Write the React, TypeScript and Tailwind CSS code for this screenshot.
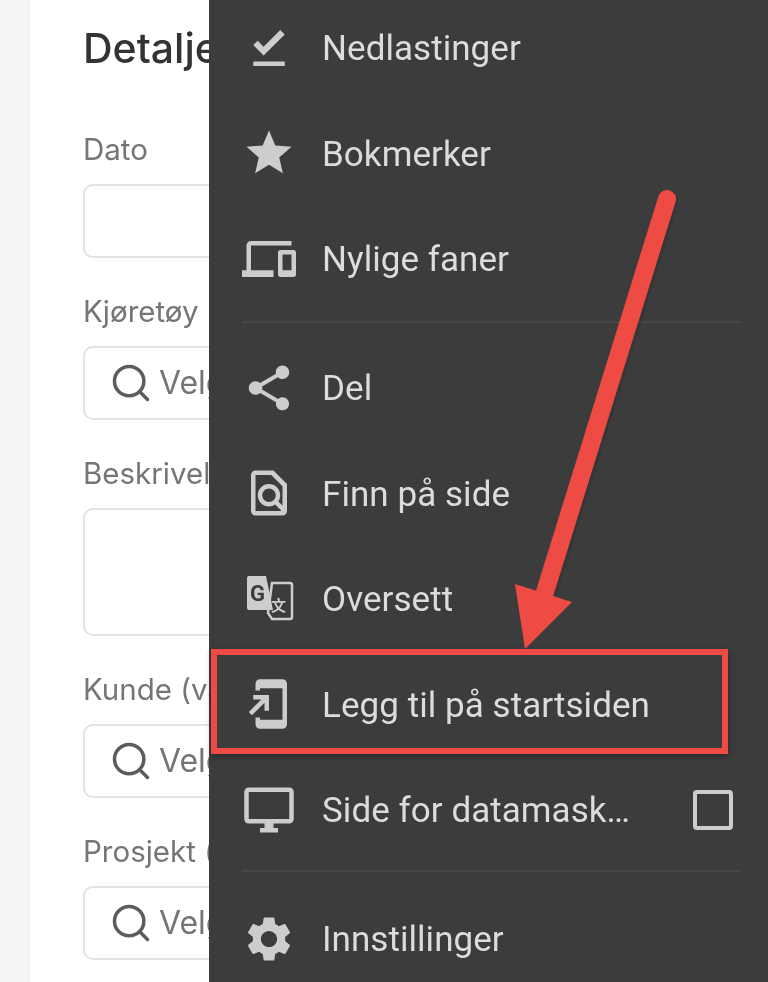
import React, { ReactNode } from 'react';
import { Search } from 'lucide-react';

// Material style icons, 24 unit grid
const Icon: React.FC<{ d: string }> = ({ d }) => (
  <svg viewBox="0 0 24 24" className="w-[54px] h-[54px] shrink-0 fill-[#cdcdcd]">
    <path d={d} />
  </svg>
);

const TranslateIcon = () => (
  <svg viewBox="0 0 54 54" className="w-[54px] h-[54px] shrink-0">
    <path d="M30 11h18a2 2 0 0 1 2 2v32a2 2 0 0 1-2 2H30l-4-6z" fill="none" stroke="#cdcdcd" strokeWidth="2.5" />
    <path d="M7 4h17l7 34H7a2 2 0 0 1-2-2V6a2 2 0 0 1 2-2z" fill="#cdcdcd" />
    <text x="8" y="29" fontFamily="Roboto, sans-serif" fontWeight="700" fontSize="22" fill="#3c3c3c">G</text>
    <text x="29" y="39" fontFamily="'Noto Sans CJK SC', sans-serif" fontWeight="700" fontSize="15" fill="#cdcdcd">文</text>
  </svg>
);

const paths = {
  downloads: 'M5 18h14v2H5v-2zm4.6-2.7L5 10.7l2-1.9 2.6 2.6L17 4l2 2-9.4 9.3z',
  star: 'M12 17.27L18.18 21l-1.64-7.03L22 9.24l-7.19-.61L12 2 9.19 8.63 2 9.24l5.46 4.73L5.82 21z',
  devices: 'M4 6h18V4H4c-1.1 0-2 .9-2 2v11H0v3h14v-3H4V6zm19 2h-6c-.55 0-1 .45-1 1v10c0 .55.45 1 1 1h6c.55 0 1-.45 1-1V9c0-.55-.45-1-1-1zm-1 9h-4v-7h4v7z',
  share: 'M18 16.08c-.76 0-1.44.3-1.96.77L8.91 12.7c.05-.23.09-.46.09-.7s-.04-.47-.09-.7l7.05-4.11c.54.5 1.25.81 2.04.81 1.66 0 3-1.34 3-3s-1.34-3-3-3-3 1.34-3 3c0 .24.04.47.09.7L8.04 9.81C7.5 9.31 6.79 9 6 9c-1.66 0-3 1.34-3 3s1.34 3 3 3c.79 0 1.5-.31 2.04-.81l7.12 4.16c-.05.21-.08.43-.08.65 0 1.61 1.31 2.92 2.92 2.92 1.61 0 2.92-1.31 2.92-2.92s-1.31-2.92-2.92-2.92z',
  find: 'M14 2H6c-1.1 0-2 .9-2 2v16c0 1.1.9 2 2 2h12c1.1 0 2-.9 2-2V8l-6-6zM6 4h7l5 5v8.58l-1.84-1.84c1.28-1.94 1.07-4.57-.64-6.28C14.55 8.49 13.28 8 12 8c-1.28 0-2.55.49-3.53 1.46-1.95 1.95-1.95 5.11 0 7.05.97.97 2.25 1.46 3.53 1.46.96 0 1.92-.28 2.75-.83L17.6 20H6V4zm8.11 11.1c-.56.56-1.31.88-2.11.88s-1.55-.31-2.11-.88c-.56-.56-.88-1.31-.88-2.11s.31-1.55.88-2.11c.56-.57 1.31-.88 2.11-.88s1.55.31 2.11.88c.56.56.88 1.31.88 2.11s-.31 1.55-.88 2.11z',
  addHome: 'M18 1.01L8 1c-1.1 0-2 .9-2 2v3h2V5h10v14H8v-1H6v3c0 1.1.9 2 2 2h10c1.1 0 2-.9 2-2V3c0-1.1-.9-1.99-2-1.99zM10 15h2V8H5v2h3.59L3 15.59 4.41 17 10 11.41V15z',
  desktop: 'M21 2H3c-1.1 0-2 .9-2 2v12c0 1.1.9 2 2 2h7v2H8v2h8v-2h-2v-2h7c1.1 0 2-.9 2-2V4c0-1.1-.9-2-2-2zm0 14H3V4h18v12z',
  settings: 'M19.14 12.94c.04-.3.06-.61.06-.94 0-.32-.02-.64-.07-.94l2.03-1.58c.18-.14.23-.41.12-.61l-1.92-3.32c-.12-.22-.37-.29-.59-.22l-2.39.96c-.5-.38-1.03-.7-1.62-.94l-.36-2.54c-.04-.24-.24-.41-.48-.41h-3.84c-.24 0-.43.17-.47.41l-.36 2.54c-.59.24-1.13.57-1.62.94l-2.39-.96c-.22-.08-.47 0-.59.22L2.74 8.87c-.12.21-.08.47.12.61l2.03 1.58c-.05.3-.09.63-.09.94s.02.64.07.94l-2.03 1.58c-.18.14-.23.41-.12.61l1.92 3.32c.12.22.37.29.59.22l2.39-.96c.5.38 1.03.7 1.62.94l.36 2.54c.05.24.24.41.48.41h3.84c.24 0 .44-.17.47-.41l.36-2.54c.59-.24 1.13-.56 1.62-.94l2.39.96c.22.08.47 0 .59-.22l1.92-3.32c.12-.22.07-.47-.12-.61l-2.01-1.58zM12 15.6c-1.98 0-3.6-1.62-3.6-3.6s1.62-3.6 3.6-3.6 3.6 1.62 3.6 3.6-1.62 3.6-3.6 3.6z',
};

const MenuRow: React.FC<{ icon: ReactNode; label: string; trailing?: ReactNode }> = ({ icon, label, trailing }) => (
  <div className="h-[105.5px] flex items-center pl-[33px] pr-[35px]">
    {icon}
    <span className="ml-[26px] mt-[3px] text-[35px] tracking-[0.05px] text-[#dcdcdc] whitespace-nowrap">{label}</span>
    {trailing && <div className="ml-auto">{trailing}</div>}
  </div>
);

const Divider = () => <div className="h-[2px] ml-[33px] mr-[28px] bg-[#474747]" />;

const Field: React.FC<{ label: string; children: ReactNode }> = ({ label, children }) => (
  <div className="mb-[35px]">
    <div className="h-[36px] mb-[17px] flex items-center text-[29.5px] text-[#757575] whitespace-nowrap">{label}</div>
    {children}
  </div>
);

const SearchInput = () => (
  <div className="h-[74px] border-2 border-[#e3e3e3] rounded-[10px] flex items-center pl-[24px] gap-[6px]">
    <Search className="w-[44px] h-[44px] text-[#5c5c5c]" strokeWidth={1.9} />
    <span className="text-[32px] text-[#757575]">Velg</span>
  </div>
);

export default function App() {
  return (
    <div className="relative w-[768px] h-[982px] overflow-hidden flex bg-[#f5f5f5] font-['Inter',sans-serif] blur-[0.6px]">
      <div className="w-[30px] shrink-0" />
      <div className="flex-1 bg-white pt-[21px] pl-[53px] pr-[40px] shadow-[0_0_4px_rgba(0,0,0,0.06)]">
        <h1 className="h-[56px] mb-[54px] flex items-center text-[41px] font-medium text-[#333333]">Detaljer</h1>
        <Field label="Dato">
          <div className="h-[74px] border-2 border-[#e3e3e3] rounded-[10px]" />
        </Field>
        <Field label="Kjøretøy">
          <SearchInput />
        </Field>
        <Field label="Beskrivelse">
          <div className="h-[128px] border-2 border-[#e3e3e3] rounded-[10px]" />
        </Field>
        <Field label="Kunde (valgfritt)">
          <SearchInput />
        </Field>
        <Field label="Prosjekt (valgfritt)">
          <SearchInput />
        </Field>
      </div>

      {/* Browser menu sheet */}
      <div className="absolute top-0 bottom-0 left-[209px] right-0 bg-[#3c3c3c] font-['Roboto',sans-serif]">
        <div className="-mt-[5px] pb-[9px]">
          <MenuRow icon={<Icon d={paths.downloads} />} label="Nedlastinger" />
          <MenuRow icon={<Icon d={paths.star} />} label="Bokmerker" />
          <MenuRow icon={<Icon d={paths.devices} />} label="Nylige faner" />
        </div>
        <Divider />
        <div className="pt-[12.5px] pb-[7.5px]">
          <MenuRow icon={<Icon d={paths.share} />} label="Del" />
          <MenuRow icon={<Icon d={paths.find} />} label="Finn på side" />
          <MenuRow icon={<TranslateIcon />} label="Oversett" />
          <MenuRow icon={<Icon d={paths.addHome} />} label="Legg til på startsiden" />
          <MenuRow
            icon={<Icon d={paths.desktop} />}
            label="Side for datamask…"
            trailing={<div className="w-[40px] h-[40px] border-[4px] border-[#cdcdcd] rounded-[4px]" />}
          />
        </div>
        <Divider />
        <div className="pt-[14px]">
          <MenuRow icon={<Icon d={paths.settings} />} label="Innstillinger" />
        </div>
      </div>

      {/* Red annotation: box round the menu row, arrow pointing at it */}
      <div className="absolute left-[211px] top-[649px] w-[517px] h-[105px] border-[6px] border-[#ee4b45] shadow-[0_2px_6px_rgba(0,0,0,0.35)]" />
      <svg viewBox="0 0 768 982" className="absolute inset-0 w-[768px] h-[982px] pointer-events-none">
        <path d="M667 199L545 592" stroke="#2a2a2a" strokeOpacity="0.35" strokeWidth="18" strokeLinecap="round" transform="translate(2 3)" />
        <path d="M667 199L545 592" stroke="#ee4b45" strokeWidth="18" strokeLinecap="round" />
        <path d="M525 649L515 584L572 602Z" fill="#ee4b45" />
      </svg>
    </div>
  );
}
